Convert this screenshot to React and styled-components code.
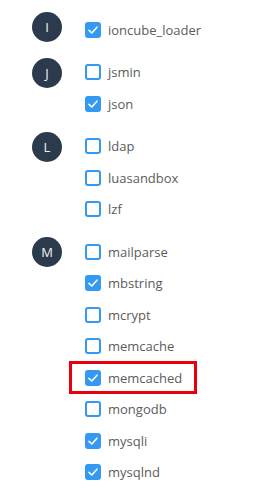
import React from "react";
import styled, { createGlobalStyle } from "styled-components";

const Global = createGlobalStyle`
  html, body { margin: 0; padding: 0; background: #fff; }
  body { font-family: "Open Sans", "Liberation Sans", sans-serif; }
`;

const Page = styled.div`
  padding: 14px 0 0 32px;
  display: flex;
  flex-direction: column;
  gap: 11px;
`;

const Group = styled.section`
  display: flex;
  align-items: flex-start;
  gap: 23px;
`;

const Avatar = styled.div`
  width: 30px;
  height: 30px;
  margin-top: ${(p) => p.$offset || 1}px;
  border-radius: 50%;
  background: #2b3a4d;
  color: #f2f2f2;
  font-size: 13px;
  display: flex;
  align-items: center;
  justify-content: center;
  flex-shrink: 0;
`;

const List = styled.div`
  display: flex;
  flex-direction: column;
`;

const Row = styled.label`
  position: relative;
  height: 31.5px;
  display: flex;
  align-items: center;
  gap: 7px;
  font-size: 13px;
  color: #5c5c5c;
  ${(p) =>
    p.$highlight &&
    `
    &::after {
      content: "";
      position: absolute;
      left: -16px;
      top: -1px;
      width: 128px;
      height: 33px;
      box-sizing: border-box;
      border: 3px solid #e8000b;
    }
  `}
`;

const Box = styled.span`
  width: 16px;
  height: 16px;
  box-sizing: border-box;
  border-radius: 3px;
  border: 2px solid #3399f3;
  background: ${(p) => (p.$checked ? "#3399f3" : "#fff")};
  display: flex;
  align-items: center;
  justify-content: center;
  flex-shrink: 0;
`;

const Check = () => (
  <svg width="12" height="12" viewBox="0 0 12 12">
    <path d="M2 6.3 L4.8 9 L10 3.2" fill="none" stroke="#fff" strokeWidth="1.6" strokeLinecap="round" strokeLinejoin="round" />
  </svg>
);

const groups = [
  { letter: "I", offset: -2, items: [["ioncube_loader", true]] },
  { letter: "J", items: [["jsmin", false], ["json", true]] },
  { letter: "L", items: [["ldap", false], ["luasandbox", false], ["lzf", false]] },
  {
    letter: "M",
    items: [
      ["mailparse", false],
      ["mbstring", true],
      ["mcrypt", false],
      ["memcache", false],
      ["memcached", true, true],
      ["mongodb", false],
      ["mysqli", true],
      ["mysqlnd", true],
    ],
  },
];

export default function App() {
  return (
    <>
      <Global />
      <Page>
        {groups.map((g) => (
          <Group key={g.letter}>
            <Avatar $offset={g.offset}>{g.letter}</Avatar>
            <List>
              {g.items.map(([name, checked, hl]) => (
                <Row key={name} $highlight={hl}>
                  <Box $checked={checked}>{checked && <Check />}</Box>
                  {name}
                </Row>
              ))}
            </List>
          </Group>
        ))}
      </Page>
    </>
  );
}
